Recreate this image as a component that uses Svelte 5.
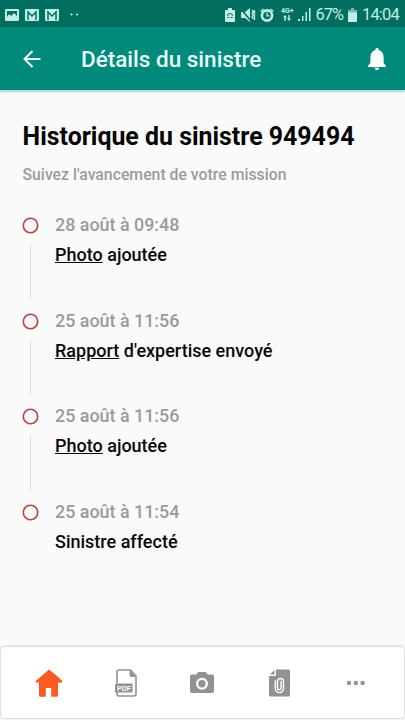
<script>
  const events = [
    { date: '28 août à 09:48', link: 'Photo', text: ' ajoutée' },
    { date: '25 août à 11:56', link: 'Rapport', text: " d'expertise envoyé" },
    { date: '25 août à 11:56', link: 'Photo', text: ' ajoutée' },
    { date: '25 août à 11:54', link: '', text: 'Sinistre affecté' }
  ];

  let activeTab = $state('home');
</script>

<div class="screen">
  <div class="status">
    <div class="notifications">
      <svg width="14" height="12" viewBox="0 0 14 12">
        <rect width="14" height="12" rx="1" />
        <path class="cut" d="M2 2h10v5L9 4 6 7 4 5 2 8z" />
      </svg>
      <svg width="14" height="12" viewBox="0 0 14 12">
        <rect width="14" height="12" rx="1" />
        <path class="line" d="M3 11V3l4 4 4-4v8" />
      </svg>
      <svg width="14" height="12" viewBox="0 0 14 12">
        <rect width="14" height="12" rx="1" />
        <path class="line" d="M3 11V3l4 4 4-4v8" />
      </svg>
      <svg class="more" width="9" height="3" viewBox="0 0 9 3">
        <circle cx="1.5" cy="1.5" r="1.1" />
        <circle cx="7" cy="1.5" r="1.1" />
      </svg>
    </div>
    <div class="system">
      <svg width="10" height="14" viewBox="0 0 10 14">
        <path d="M3 0h4v2h2q1 0 1 1v10q0 1-1 1H1q-1 0-1-1V3q0-1 1-1h2z" />
        <path class="line thin" d="M2.5 8a2.5 2.5 0 0 1 5 0M2.3 9.5h2M5.7 9.5h2" />
      </svg>
      <svg class="mute" width="15" height="14" viewBox="0 0 15 14">
        <path d="M0 4h4l5-4v14L4 10H0z" />
        <path class="line" d="M0 1l10 12" />
        <path class="wave" d="M11 2l1.3 1.7L11 5.5l1.3 1.7L11 9l1.3 2M13.5 2v10" />
      </svg>
      <svg class="alarm" width="14" height="14" viewBox="0 0 14 14">
        <circle cx="7" cy="7.5" r="6.4" />
        <path class="wave" d="M.5 3.5l3-2.5M13.5 3.5l-3-2.5" />
        <circle class="cut" cx="7" cy="7.5" r="3.8" />
        <path class="wave" d="M7 4.500v3.300h2.500" />
      </svg>
      <div class="network">
        <span>4G+</span>
        <svg width="8" height="6" viewBox="0 0 8 6">
          <path d="M2 0l2 2.5H2.7V6H1.3V2.5H0zM6 6L4 3.5h1.3V0h1.4v3.5H8z" />
        </svg>
      </div>
      <svg class="signal" width="13" height="13" viewBox="0 0 13 13">
        <path d="M0 11h2v2H0zM4 8h1.5v5H4zM7.5 4H9v9H7.5zM11 0h1.5v13H11z" />
      </svg>
      <span class="percent">67%</span>
      <svg class="battery" width="9" height="14" viewBox="0 0 9 14">
        <path opacity=".6" d="M3 0h3v2h3v3H0V2h3z" />
        <path d="M0 4.5h9V14H0z" />
      </svg>
      <span class="clock">14:04</span>
    </div>
  </div>

  <header>
    <button class="back" aria-label="Retour">
      <svg width="18" height="18" viewBox="0 0 18 18">
        <path d="M17.5 9H1.5M9.5 1L1.5 9l8 8" />
      </svg>
    </button>
    <h1>Détails du sinistre</h1>
    <button class="bell" aria-label="Notifications">
      <svg width="18" height="22" viewBox="0 0 18 22">
        <path d="M9 0c1 0 1.6.7 1.6 1.5v.6C13.7 2.9 15.6 5.5 15.6 9v6l2.4 2.7V19H0v-1.3L2.4 15V9c0-3.5 1.9-6.1 5-6.9v-.6C7.4.7 8 0 9 0zM6.8 19.8h4.4A2.2 2.2 0 0 1 9 22a2.2 2.2 0 0 1-2.2-2.2z" />
      </svg>
    </button>
  </header>

  <main>
    <h2>Historique du sinistre 949494</h2>
    <p class="subtitle">Suivez l'avancement de votre mission</p>

    <ul class="timeline">
      {#each events as event, i}
        <li>
          <div class="track">
            <svg class="dot" width="17" height="17" viewBox="0 0 17 17">
              <circle cx="8.5" cy="8.5" r="7.2" />
            </svg>
            {#if i < events.length - 1}
              <span class="bar"></span>
            {/if}
          </div>
          <div class="event">
            <div class="date">{event.date}</div>
            <div class="label">{#if event.link}<span class="link">{event.link}</span>{/if}{event.text}</div>
          </div>
        </li>
      {/each}
    </ul>
  </main>

  <nav>
    <button class:active={activeTab === 'home'} aria-label="Accueil" onclick={() => (activeTab = 'home')}>
      <svg width="28" height="28" viewBox="0 0 28 28">
        <path d="M14 .5L.7 12q-.5 1 .3 1.5h3V26.5q0 1.2 1.2 1.2h5.6V19h5.4v8.7h5.6q1.2 0 1.2-1.2V13.5h4q.8-.5.3-1.5L21.500 6.500z" />
      </svg>
    </button>
    <button class:active={activeTab === 'pdf'} aria-label="PDF" onclick={() => (activeTab = 'pdf')}>
      <svg width="22" height="28" viewBox="0 0 22 28">
        <path class="outline" d="M2 14V3q0-2 2-2h11.5l5.5 6v18q0 2-2 2H4q-2 0-2-2v-2" />
        <path d="M14.5 1l6.5 7h-4.5q-2 0-2-2z" />
        <rect y="14.5" width="17.5" height="9" rx="1" />
        <text x="2" y="21.8">PDF</text>
      </svg>
    </button>
    <button class:active={activeTab === 'camera'} aria-label="Appareil photo" onclick={() => (activeTab = 'camera')}>
      <svg width="24" height="21" viewBox="0 0 24 21">
        <path fill-rule="evenodd" d="M8.3 0h7.4l2.2 2.5H22q2 0 2 2V19q0 2-2 2H2q-2 0-2-2V4.5q0-2 2-2h4.1zM12 5.7a6 6 0 1 0 0 12 6 6 0 0 0 0-12z" />
        <circle cx="12" cy="11.7" r="3.7" />
      </svg>
    </button>
    <button class:active={activeTab === 'files'} aria-label="Pièces jointes" onclick={() => (activeTab = 'files')}>
      <svg width="21" height="28" viewBox="0 0 21 28">
        <path d="M7 .5h12.5q1.5 0 1.5 1.5v24q0 1.5-1.5 1.5h-18Q0 27.5 0 26V7h5.5Q7 7 7 5.5zM5.5 1v4.5H.8z" />
        <path class="clip" d="M6.3 12v7.5a4.1 4.1 0 0 0 8.2 0v-7a3 3 0 0 0-6 0V19a1.8 1.8 0 0 0 3.6 0v-6.5" />
      </svg>
    </button>
    <button class:active={activeTab === 'more'} aria-label="Plus" onclick={() => (activeTab = 'more')}>
      <svg width="20" height="6" viewBox="0 0 20 6">
        <circle cx="3" cy="3" r="2.2" />
        <circle cx="9.8" cy="3" r="2.2" />
        <circle cx="16.6" cy="3" r="2.2" />
      </svg>
    </button>
  </nav>
</div>

<style>
  :global(body) {
    margin: 0;
    background: #fafafa;
  }

  .screen {
    display: flex;
    flex-direction: column;
    width: 405px;
    height: 720px;
    overflow: hidden;
    background: #fafafa;
    font-family: Roboto, "Liberation Sans", sans-serif;
  }

  button {
    display: flex;
    padding: 0;
    border: 0;
    background: none;
  }

  svg {
    display: block;
    flex: none;
  }

  .status {
    display: flex;
    flex: none;
    justify-content: space-between;
    align-items: center;
    box-sizing: border-box;
    height: 27px;
    padding: 2px 6px 0 5px;
    background: #016e60;
    color: #bfeee5;
    fill: #bfeee5;
  }

  .notifications,
  .system {
    display: flex;
    align-items: center;
  }

  .notifications {
    gap: 6px;
  }

  .more {
    margin-left: 5px;
  }

  .cut {
    fill: #016e60;
  }

  .line {
    fill: none;
    stroke: #016e60;
    stroke-width: 1.5;
  }

  .thin {
    stroke-width: 1;
  }

  .wave {
    fill: none;
    stroke: #bfeee5;
    stroke-width: 1.3;
  }

  .mute {
    margin-left: 6px;
  }

  .alarm {
    margin-left: 4px;
  }

  .network {
    display: flex;
    flex-direction: column;
    align-items: center;
    margin-left: 7px;
    font-size: 7px;
    font-weight: 700;
    line-height: 7px;
  }

  .signal {
    margin-left: 4px;
  }

  .percent,
  .clock {
    font-size: 16.5px;
    line-height: 20px;
  }

  .percent {
    margin-left: 5px;
    letter-spacing: -1.1px;
  }

  .battery {
    margin-left: 5px;
  }

  .clock {
    margin-left: 5px;
    letter-spacing: -0.8px;
  }

  header {
    display: flex;
    flex: none;
    align-items: center;
    box-sizing: border-box;
    height: 63px;
    padding: 0 19px 0 23px;
    background: #01897b;
    color: #e6fffa;
    box-shadow: 0 2px 2px rgba(60, 180, 160, 0.45);
  }

  .back svg {
    fill: none;
    stroke: #e6fffa;
    stroke-width: 2;
  }

  h1 {
    flex: 1;
    margin: 1px 0 0 40px;
    font-size: 22.5px;
    font-weight: 500;
    line-height: 30px;
  }

  .bell svg {
    fill: #fff;
  }

  main {
    flex: 1;
    padding: 31px 22px 0;
  }

  h2 {
    margin: 0 0 0 0.6px;
    color: #050505;
    font-size: 24.9px;
    font-weight: 700;
    line-height: 32px;
    white-space: nowrap;
  }

  .subtitle {
    margin: 11px 0 0 0.5px;
    color: #9c9c9c;
    font-size: 15.8px;
    font-weight: 500;
    line-height: 22px;
  }

  .timeline {
    margin: 28px 0 0;
    padding: 0;
    list-style: none;
  }

  li {
    display: flex;
    gap: 17px;
    height: 95.7px;
  }

  .track {
    display: flex;
    flex-direction: column;
    align-items: center;
    width: 16px;
  }

  .dot {
    margin-top: 3px;
    fill: none;
    stroke: #bd4540;
    stroke-width: 1.6;
  }

  .bar {
    width: 1px;
    height: 55px;
    margin-top: 10px;
    background: #dedede;
  }

  .date,
  .label {
    font-size: 18px;
    font-weight: 500;
    line-height: 22px;
    white-space: pre;
  }

  .date {
    color: #9b9b9b;
    font-size: 17.9px;
  }

  .label {
    margin-top: 8px;
    color: #080808;
  }

  .link {
    text-decoration: underline;
  }

  nav {
    display: flex;
    flex: none;
    align-items: center;
    justify-content: space-around;
    box-sizing: border-box;
    height: 71px;
    margin: 0 1px 2px;
    padding: 0 10px;
    border-radius: 4px;
    background: #fff;
    box-shadow: 0 0 3px rgba(0, 0, 0, 0.3);
  }

  nav button {
    justify-content: center;
    width: 76px;
    fill: #929292;
  }

  nav .active {
    fill: #fb5b23;
  }

  .outline {
    fill: none;
    stroke: #929292;
    stroke-width: 1.6;
  }

  nav text {
    fill: #fff;
    font-size: 7px;
    font-weight: 700;
  }

  .clip {
    fill: none;
    stroke: #fff;
    stroke-width: 1.4;
    stroke-linecap: round;
  }
</style>
